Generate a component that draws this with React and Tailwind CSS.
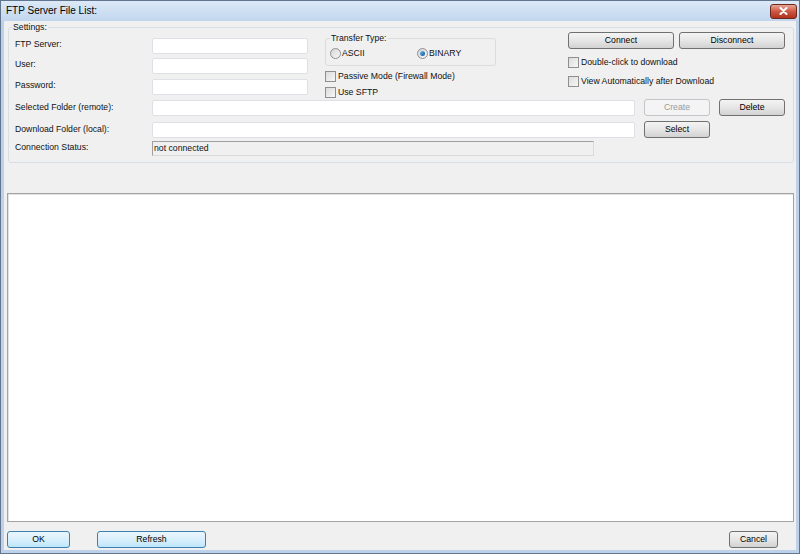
import React from "react";

function Btn({ w, children, kind = "normal", className = "" }) {
  const styles = {
    normal:
      "border-[#707070] bg-gradient-to-b from-[#f4f4f4] via-[#e6e6e6] to-[#d2d2d2] text-black",
    focus:
      "border-[#3c7fb1] bg-gradient-to-b from-[#eaf6fd] via-[#d9f0fc] to-[#bee6fd] text-black",
    disabled: "border-[#c2c5c9] bg-[#f4f4f4] text-[#9a9a9a]",
  };
  return (
    <div
      className={`h-[17px] flex items-center justify-center border rounded-[3px] ${styles[kind]} ${className}`}
      style={{ width: w }}
    >
      {children}
    </div>
  );
}

function Check({ label }) {
  return (
    <div className="flex items-center h-[11px]">
      <div className="w-[11px] h-[11px] border border-[#8f8f8f] bg-gradient-to-br from-[#dcdcdc] to-[#f7f7f7]" />
      <span className="ml-[2px]">{label}</span>
    </div>
  );
}

function Radio({ label, checked }) {
  return (
    <div className="flex items-center h-[11px]">
      <div className="w-[11px] h-[11px] rounded-full border border-[#8f8f8f] bg-gradient-to-br from-[#d6d6d6] to-[#f8f8f8] flex items-center justify-center">
        {checked && (
          <div className="w-[5px] h-[5px] rounded-full bg-gradient-to-br from-[#6fc1f0] to-[#0f4f96]" />
        )}
      </div>
      <span className="ml-[1px]">{label}</span>
    </div>
  );
}

function Field({ w }) {
  return (
    <div
      className="h-[16px] bg-white border border-[#dde1e6] rounded-[2px]"
      style={{ width: w }}
    />
  );
}

export default function App() {
  return (
    <div className="w-[800px] h-[554px] flex flex-col bg-[#bdd2ea] border border-[#61758f] font-['Liberation_Sans',Arial,sans-serif] text-[8.7px] leading-none text-[#111]">
      {/* title bar */}
      <div className="h-[20px] flex items-center pl-[5px] pr-[2px] bg-gradient-to-b from-[#dce9f7] to-[#c1d6ed]">
        <span className="text-[10px] text-black">FTP Server File List:</span>
        <div className="ml-auto w-[27px] h-[15px] rounded-[3px] border border-[#6b2a20] bg-gradient-to-b from-[#e8a594] via-[#cc5742] to-[#b2301c] flex items-center justify-center">
          <svg width="9" height="8" viewBox="0 0 9 8">
            <path d="M1.5 1 L7.5 7 M7.5 1 L1.5 7" stroke="#fff" strokeWidth="2" strokeLinecap="round" />
          </svg>
        </div>
      </div>

      {/* client area */}
      <div className="flex-1 mx-[3px] mb-[3px] bg-[#f0f0f0] flex flex-col">
        {/* Settings group */}
        <div className="relative mt-[6px] ml-[4px] mr-[2px] h-[136px] border border-[#d5dfe5] rounded-[3px] pl-[6px]">
          <span className="absolute left-[3px] top-[-6px] px-[1px] bg-[#f0f0f0] leading-[11px]">
            Settings:
          </span>

          <div className="flex mt-[4px] h-[67px]">
            {/* server / user / password */}
            <div className="w-[293px] pt-[6px] flex flex-col">
              <div className="flex items-start h-[16px]">
                <span className="w-[137px] pt-[2px]">FTP Server:</span>
                <Field w={156} />
              </div>
              <div className="flex items-start h-[16px] mt-[4px]">
                <span className="w-[137px] pt-[2px]">User:</span>
                <Field w={156} />
              </div>
              <div className="flex items-start h-[16px] mt-[5px]">
                <span className="w-[137px] pt-[2px]">Password:</span>
                <Field w={156} />
              </div>
            </div>

            {/* transfer type */}
            <div className="ml-[17px] w-[171px] flex flex-col">
              <div className="relative mt-[6px] h-[28px] border border-[#dcdcdc] rounded-[3px] pl-[4px] pt-[9px]">
                <span className="absolute left-[4px] top-[-6px] px-[1px] bg-[#f0f0f0] leading-[11px]">
                  Transfer Type:
                </span>
                <div className="flex">
                  <div className="w-[87px]">
                    <Radio label="ASCII" />
                  </div>
                  <Radio label="BINARY" checked />
                </div>
              </div>
              <div className="mt-[5px]">
                <Check label="Passive Mode (Firewall Mode)" />
              </div>
              <div className="mt-[5px]">
                <Check label="Use SFTP" />
              </div>
            </div>

            {/* connect */}
            <div className="ml-[72px] flex flex-col">
              <div className="flex gap-[5px]">
                <Btn w={106}>Connect</Btn>
                <Btn w={106}>Disconnect</Btn>
              </div>
              <div className="mt-[8px]">
                <Check label="Double-click to download" />
              </div>
              <div className="mt-[8px]">
                <Check label="View Automatically after Download" />
              </div>
            </div>
          </div>

          <div className="flex items-center h-[17px]">
            <span className="w-[137px]">Selected Folder (remote):</span>
            <Field w={483} />
            <Btn w={66} kind="disabled" className="ml-[9px]">
              Create
            </Btn>
            <Btn w={66} className="ml-[9px]">
              Delete
            </Btn>
          </div>
          <div className="flex items-center h-[17px] mt-[5px]">
            <span className="w-[137px]">Download Folder (local):</span>
            <Field w={483} />
            <Btn w={66} className="ml-[9px]">
              Select
            </Btn>
          </div>
          <div className="flex items-start h-[15px] mt-[3px]">
            <span className="w-[137px] pt-[2px]">Connection Status:</span>
            <div className="w-[442px] h-[15px] flex items-center pl-[1px] bg-[#f0f0f0] border border-[#dadada] border-t-[#a0a0a0] border-l-[#a0a0a0]">
              not connected
            </div>
          </div>
        </div>

        {/* file list */}
        <div className="mt-[30px] ml-[3px] mr-[2px] h-[329px] bg-white border border-[#a3a3a3] shadow-[inset_1px_1px_0_#e3e3e3]" />

        {/* bottom buttons */}
        <div className="h-[28px] flex items-start pt-[9px] pl-[3px] pr-[18px]">
          <Btn w={63} kind="focus">
            OK
          </Btn>
          <Btn w={109} kind="focus" className="ml-[27px]">
            Refresh
          </Btn>
          <Btn w={49} className="ml-auto">
            Cancel
          </Btn>
        </div>
      </div>
    </div>
  );
}
